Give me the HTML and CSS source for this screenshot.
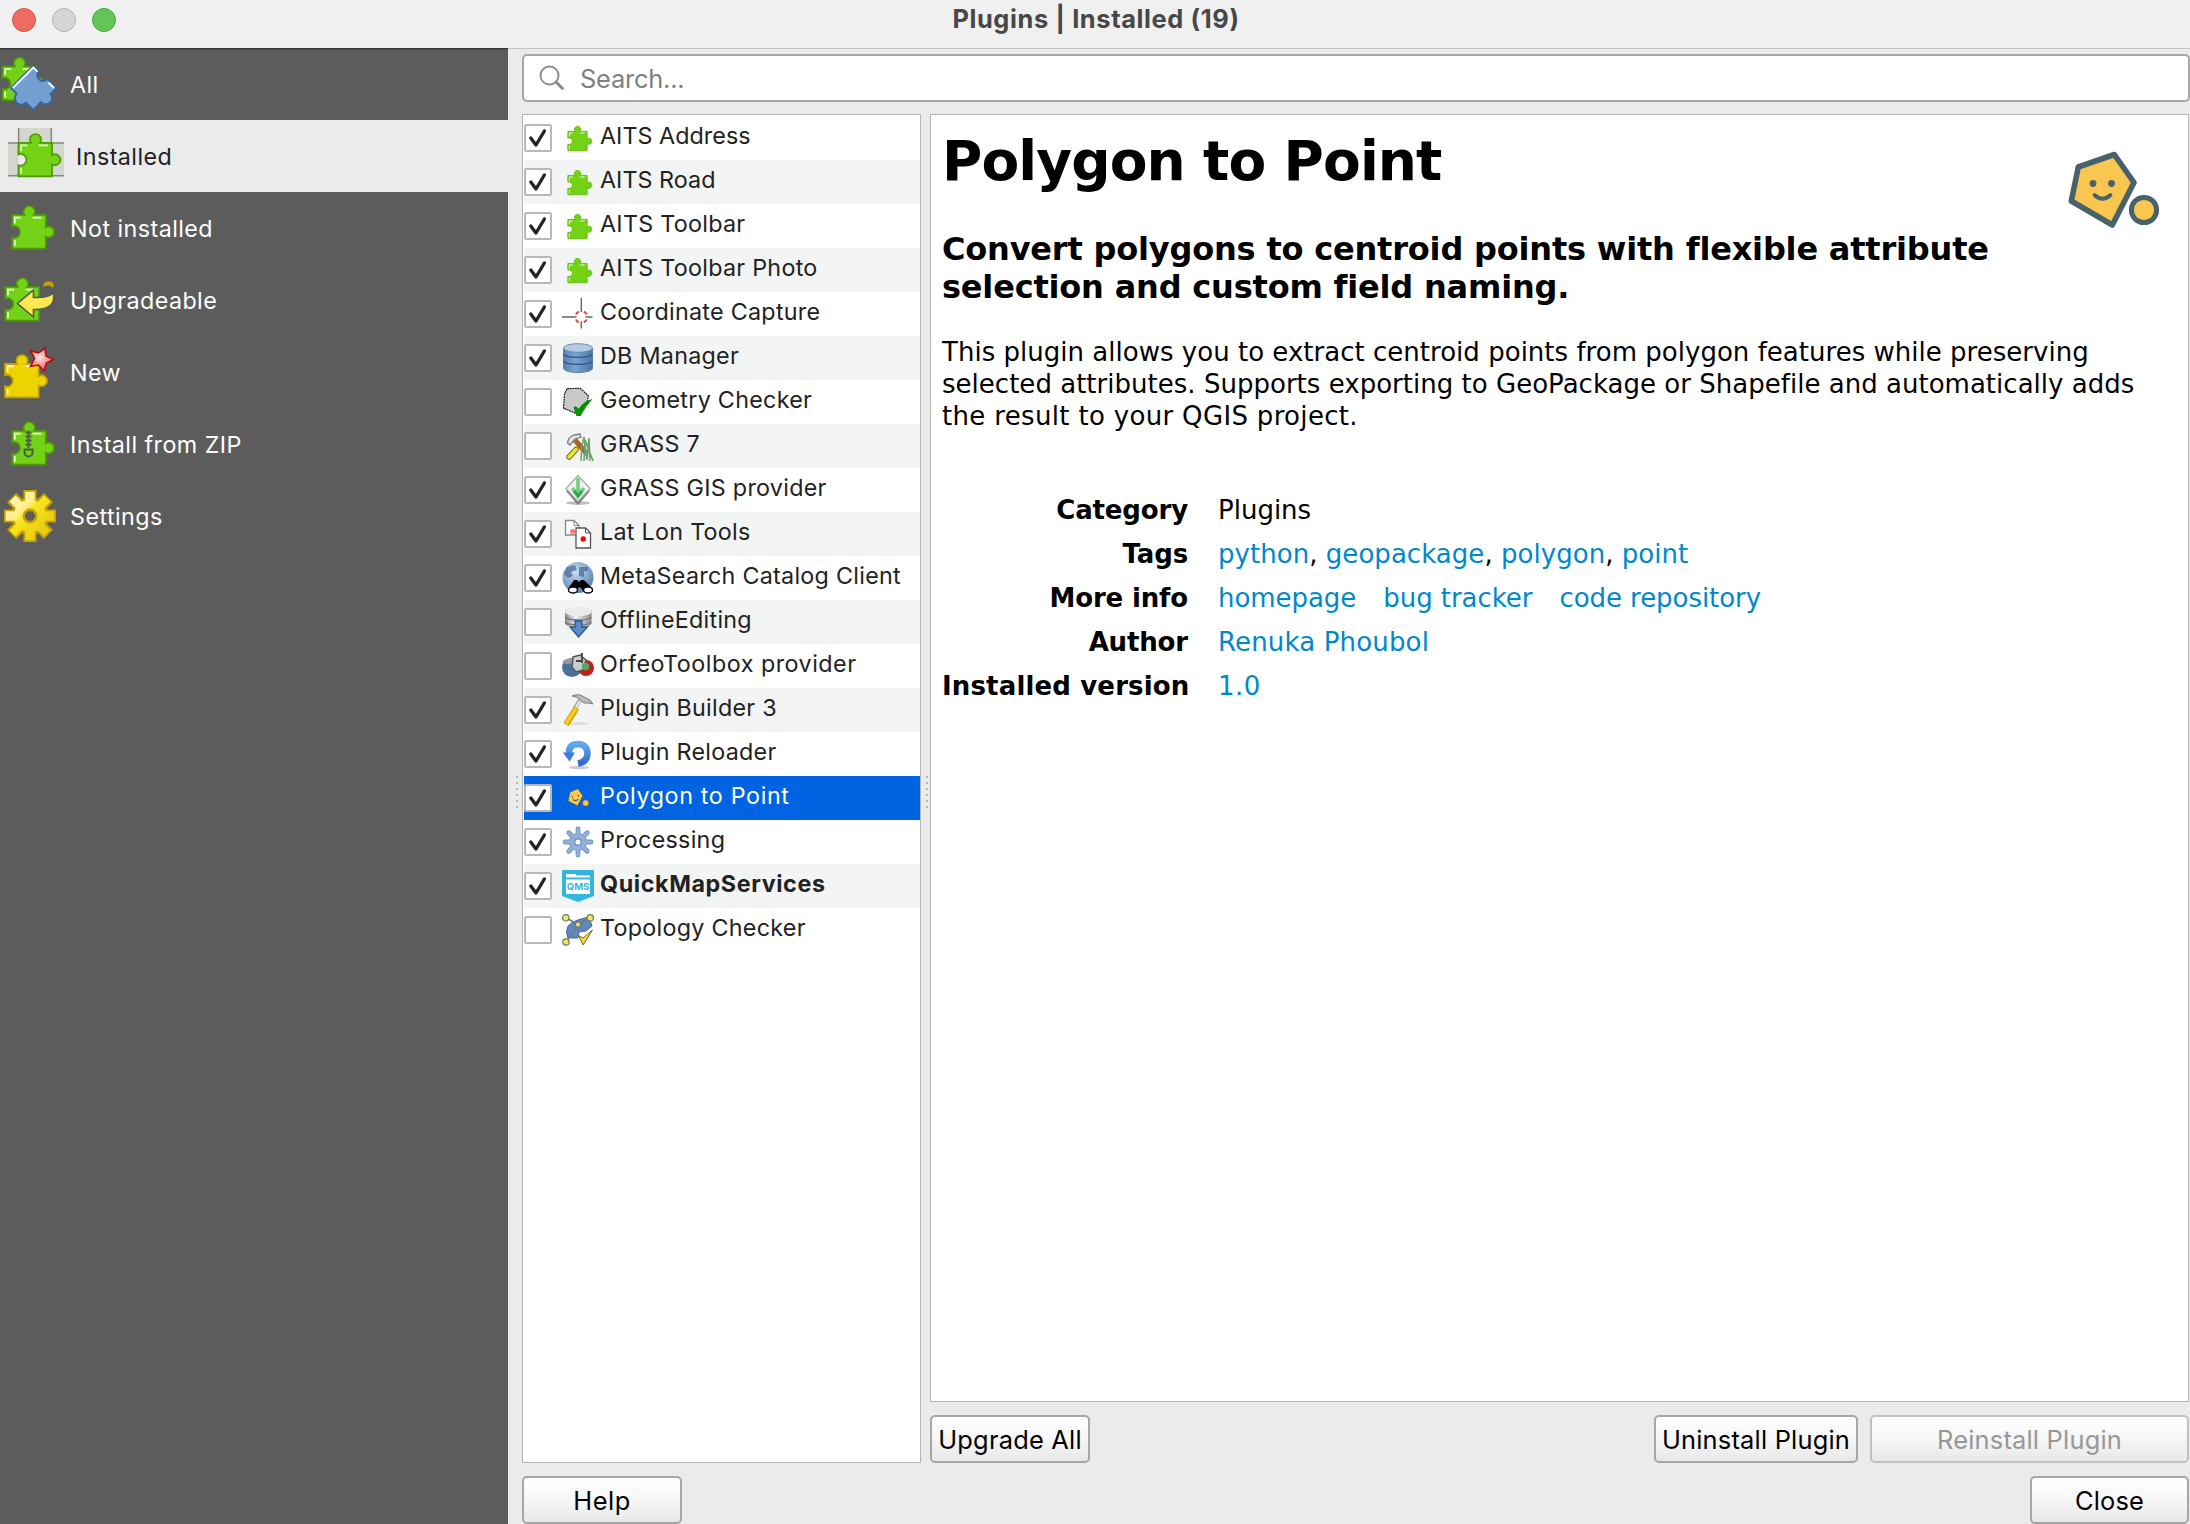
FILE: index.html
```html
<!DOCTYPE html>
<html lang="en">
<head>
<meta charset="utf-8">
<title>Plugins | Installed (19)</title>
<link rel="stylesheet" href="styles.css">
</head>
<body>
<svg class="defs" aria-hidden="true">
  <defs>
    <linearGradient id="gold" x1="0" y1="0" x2="1" y2="1"><stop offset="0" stop-color="#fffbd0"/><stop offset=".35" stop-color="#fff08a"/><stop offset=".45" stop-color="#fbe320"/><stop offset="1" stop-color="#dcc000"/></linearGradient>
    <linearGradient id="db" x1="0" x2="1"><stop offset="0" stop-color="#5580b0"/><stop offset=".4" stop-color="#7ba3d2"/><stop offset="1" stop-color="#4a76a8"/></linearGradient>
    <linearGradient id="silver" x1="0" x2="1"><stop offset="0" stop-color="#888"/><stop offset=".4" stop-color="#f2f2f2"/><stop offset="1" stop-color="#888"/></linearGradient>
    <linearGradient id="reload" x1="0" y1="0" x2="0" y2="1"><stop offset="0" stop-color="#62aaf0"/><stop offset="1" stop-color="#2f6bd0"/></linearGradient>
    <radialGradient id="star" cx=".4" cy=".4" r=".6"><stop offset="0" stop-color="#ffe6e6"/><stop offset="1" stop-color="#ee5a5a"/></radialGradient>
    <radialGradient id="globe" cx=".4" cy=".3" r=".8"><stop offset="0" stop-color="#cfe0f4"/><stop offset="1" stop-color="#4a74a8"/></radialGradient>
    <symbol id="puzzle" viewBox="0 0 44 44" overflow="visible">
      <path d="M1 9H13.4A5.6 5.6 0 1 1 22.6 9H34.6V21.4A5.4 5.4 0 1 1 34.6 30.6V42.6H1V31.4A5.8 5.8 0 1 0 1 20.6Z" stroke-width="1.7"/>
      <path d="M3.6 17.5V11.6H9.7M21.3 11.6H30.2M3.6 34V40" fill="none" stroke="#fff" stroke-width="1.7" opacity=".85"/>
    </symbol>
    <symbol id="check" viewBox="0 0 28 28"><path d="M6.800 14L12 21L20.400 7" fill="none" stroke="#222" stroke-width="3.300" stroke-linecap="round" stroke-linejoin="round"/></symbol>
    <symbol id="smallpuzzle" viewBox="0 0 32 32"><use href="#puzzle" x="5.300" y="4.300" width="25.200" height="25.200" class="lime"/></symbol>
  </defs>
</svg>
<div class="window">
  <header class="titlebar">
    <div class="lights"><i class="close"></i><i class="minimize"></i><i class="maximize"></i></div>
    <h1>Plugins | Installed (19)</h1>
  </header>
  <div class="main">
    <nav class="sidebar">
      <a class="tab"><svg viewBox="0 0 70 72"><use href="#puzzle" x="1.5" y="9.5" width="44" height="44" class="green"/><path d="M33.3 17.5L38.8 23A5.6 5.6 0 1 0 47.4 31.2L56.3 40L50.5 46A5.6 5.6 0 1 1 41 54L33.3 62L26 54.5A5.6 5.6 0 1 1 16.6 45.8L11 40Z" fill="#729fcf" stroke="#3465a4" stroke-width="1.8"/><path d="M12.8 40L33.3 19.5L37.5 23.7M48.5 34.5L54 40" fill="none" stroke="#fff" stroke-width="1.8"/></svg>All</a>
      <a class="tab current"><svg viewBox="0 0 70 72"><path d="M18 8H52V23H64V56H8V23H18Z" fill="#d3d7cf"/><path d="M18.6 8V56M51.3 8V56M8 23H64M8 55.8H64" stroke="#858780" stroke-width="1.5"/><path d="M18 31L27 34V46L18 45Z" fill="#ececec"/><use href="#puzzle" x="17.5" y="13.8" width="44" height="44" class="green"/></svg>Installed</a>
      <a class="tab"><svg viewBox="0 0 70 72"><use href="#puzzle" x="11.2" y="14" width="44" height="44" class="green"/></svg>Not installed</a>
      <a class="tab"><svg viewBox="0 0 70 72"><use href="#puzzle" x="4.4" y="14" width="44" height="44" class="green"/><path d="M40 28L41 20H48L56 24V44H40Z" fill="#5c5c5c"/><path d="M43.5 23V19.5Q48 15.5 53.5 19V24Q49 19.5 43.5 23Z" fill="#c4a000"/><path d="M17.500 39.500L33.500 26V33.500Q50 34 53.700 28V34Q53 46 33.500 45.500V53Z" fill="#fce94f" stroke="#555" stroke-width="1.6"/></svg>Upgradeable</a>
      <a class="tab"><svg viewBox="0 0 70 72"><use href="#puzzle" x="4" y="18.8" width="44" height="44" class="yellow"/><path d="M45 12L46 20L53.5 23.5L46.5 27L44 35L38.5 29L30.5 30.5L34.5 22.5L30.5 15L38.5 17Z" fill="url(#star)" stroke="#b50e0e" stroke-width="1.6"/></svg>New</a>
      <a class="tab"><svg viewBox="0 0 70 72"><use href="#puzzle" x="11.2" y="14" width="44" height="44" class="green"/><path d="M28.5 22.5V40M25.5 24.5H31.5M25.5 28.5H31.5M25.5 32.5H31.5M25.5 36.5H31.5" stroke="#4c5a48" stroke-width="1.9"/><path d="M24.5 41.5H32.5V44.5A4 4 0 0 1 24.5 44.5Z" fill="none" stroke="#4c5a48" stroke-width="2"/></svg>Install from ZIP</a>
      <a class="tab"><svg viewBox="0 0 70 72"><mask id="hole" maskUnits="userSpaceOnUse" x="0" y="0" width="70" height="72"><path d="M0 0H70V72H0Z" fill="#fff"/><circle cx="30" cy="36" r="5"/></mask><g mask="url(#hole)"><g fill="#c4a000"><circle cx="30" cy="36" r="19"/><path d="M23.5 10H36.5V62H23.5ZM4 29.5H56V42.5H4Z"/><path d="M23.5 10H36.5V62H23.5ZM4 29.5H56V42.5H4Z" transform="rotate(45 30 36)"/></g><path d="M25.2 11.8H34.8V20.5Q36.500 21 38 21.900L44.200 15.600L50.500 21.800L44.200 28Q45 29.500 45.500 31.200H54.300V40.800H45.500Q45 42.500 44.200 44L50.500 50.200L44.200 56.400L38 50.200Q36.500 51 34.800 51.500V60.200H25.200V51.500Q23.500 51 22 50.200L15.800 56.400L9.500 50.200L15.800 44Q15 42.500 14.500 40.800H5.700V31.200H14.500Q15 29.500 15.800 28L9.500 21.800L15.800 15.600L22 21.900Q23.500 21 25.200 20.500Z" fill="url(#gold)"/><circle cx="30" cy="36" r="6" fill="none" stroke="#c4a000" stroke-width="2.8"/></g></svg>Settings</a>
    </nav>
    <div class="content">
      <div class="search"><svg viewBox="0 0 28 28"><circle cx="11.5" cy="11.5" r="9" fill="none" stroke="#8e8e8e" stroke-width="2"/><path d="M18 18L24.5 24.5" stroke="#8e8e8e" stroke-width="3" stroke-linecap="round"/></svg>Search...</div>
      <div class="panes">
        <ul class="plugins">
          <li><b class="box"><svg><use href="#check"/></svg></b><svg class="icon"><use href="#smallpuzzle"/></svg><span class="tight">AITS Address</span></li>
          <li><b class="box"><svg><use href="#check"/></svg></b><svg class="icon"><use href="#smallpuzzle"/></svg><span class="tight">AITS Road</span></li>
          <li><b class="box"><svg><use href="#check"/></svg></b><svg class="icon"><use href="#smallpuzzle"/></svg><span>AITS Toolbar</span></li>
          <li><b class="box"><svg><use href="#check"/></svg></b><svg class="icon"><use href="#smallpuzzle"/></svg><span>AITS Toolbar Photo</span></li>
          <li><b class="box"><svg><use href="#check"/></svg></b><svg class="icon" viewBox="0 0 32 32"><path d="M19.300 0V14M19.300 23.500V30.500M0 19H14.500M23.500 19H30.500" stroke="#666" stroke-width="1.4"/><path d="M14 16.500Q14.700 14.500 16.800 13.700M21.800 13.700Q23.900 14.500 24.600 16.500M24.600 21.500Q23.900 23.500 21.800 24.300M16.800 24.300Q14.700 23.500 14 21.500" fill="none" stroke="#d64a4a" stroke-width="2.1"/></svg><span>Coordinate Capture</span></li>
          <li><b class="box"><svg><use href="#check"/></svg></b><svg class="icon" viewBox="0 0 32 32"><path d="M1.5 6V26C1.5 32 30.5 32 30.5 26V6Z" fill="url(#db)" stroke="#5f81ab"/><ellipse cx="16" cy="6" rx="14.5" ry="4.3" fill="#b4c9e2" stroke="#6f8db0"/><path d="M1.5 12C3 16.5 29 16.5 30.5 12M1.5 19C3 23.5 29 23.5 30.5 19" fill="none" stroke="#2d5384" stroke-width="1.200"/></svg><span>DB Manager</span></li>
          <li><b class="box"></b><svg class="icon" viewBox="0 0 32 32"><path d="M5 2.7L18.3 2.3L26.3 9.7L25 18L13 27L1.5 22.3L2.5 8Z" fill="#c8c8c8" stroke="#111" stroke-width="1.1" stroke-dasharray="2 .6"/><path d="M11.5 21.5Q14 19 16.5 23Q22 14.5 30.5 13Q23 21 18.5 30H14.5Z" fill="#009000"/></svg><span>Geometry Checker</span></li>
          <li><b class="box"></b><svg class="icon" viewBox="0 0 32 32"><path d="M13 10L25 24" stroke="#a9661c" stroke-width="5"/><path d="M19 31L20 16L22 7L25 30L27 8L28 31M22 31L23 10L31 31" fill="none" stroke="#6fa06c" stroke-width="1.6"/><path d="M7 27L14 19.5" stroke="#77772a" stroke-width="5.5" stroke-linecap="round"/><path d="M7 27L14 19.5" stroke="#e9e52e" stroke-width="3.500" stroke-linecap="round"/><path d="M5.5 13Q6 7 12 5L18 4L19 7L13 9L8 15Z" fill="#e6e6e6" stroke="#777" stroke-width="1.3"/></svg><span>GRASS 7</span></li>
          <li><b class="box"><svg><use href="#check"/></svg></b><svg class="icon" viewBox="0 0 32 32"><ellipse cx="16" cy="29" rx="12" ry="1.8" fill="#bbb"/><path d="M4 17L16 31L28 17L16 5Z" fill="#777"/><path d="M16 1.5L28 14.5L16 27.5L4 14.5Z" fill="#eef4ee" stroke="#aaa" stroke-width="1.3"/><path d="M16 4V19M10.500 14L16 22L22 14" fill="none" stroke="#6fd07c" stroke-width="3.6"/><path d="M12 17L16 22L20 17" fill="none" stroke="#35a84e" stroke-width="3"/></svg><span>GRASS GIS provider</span></li>
          <li><b class="box"><svg><use href="#check"/></svg></b><svg class="icon" viewBox="0 0 32 32"><path d="M3.5 2.5H12L17 7.5V17H3.5Z" fill="#fff" stroke="#888" stroke-width="1.3"/><path d="M12 2.5V7.5H17" fill="none" stroke="#888"/><circle cx="10.7" cy="13.5" r="2.6" fill="#f77"/><path d="M14 10H23.5L28.5 15V30H14Z" fill="#fff" stroke="#555" stroke-width="1.3"/><path d="M23.5 10V15H28.5" fill="none" stroke="#555"/><circle cx="21.2" cy="21" r="2.7" fill="#f00"/></svg><span>Lat Lon Tools</span></li>
          <li><b class="box"><svg><use href="#check"/></svg></b><svg class="icon" viewBox="0 0 32 32"><circle cx="16" cy="15.5" r="15.5" fill="url(#globe)"/><path d="M5 5L13 3L15 8L9 10L11 14L6 16L2 12ZM17 5H26V9H22V15L17 14Z" fill="#3b618e" opacity=".65"/><path d="M6 27L12 18H15L17 20L19 18H22L31 27V30H22L18 25L12 30H7Z" fill="#000"/><ellipse cx="11" cy="28" rx="4.5" ry="3" fill="#fff" stroke="#111" stroke-width="1.5"/><ellipse cx="26" cy="28" rx="4.5" ry="3" fill="#fff" stroke="#111" stroke-width="1.5"/></svg><span>MetaSearch Catalog Client</span></li>
          <li><b class="box"></b><svg class="icon" viewBox="0 0 32 32"><path d="M3 4V17C3 23 29.5 23 29.5 17V4Z" fill="url(#silver)"/><path d="M3 11C6 15 27 15 29.5 11M3 16C6 20 27 20 29.5 16" fill="none" stroke="#777" stroke-width="1.4"/><ellipse cx="16.3" cy="5.5" rx="13.3" ry="4.8" fill="#ebebeb"/><path d="M13 15H20V21H25.5L16.5 31L8 21H13Z" fill="#5b8ac8" stroke="#2d5384" stroke-width="1.3"/></svg><span>OfflineEditing</span></li>
          <li><b class="box"></b><svg class="icon" viewBox="0 0 32 32"><ellipse cx="10" cy="17.5" rx="10" ry="9.5" fill="#4a709e"/><path d="M0 12Q5 7 16 8L14 13L4 14Z" fill="#999"/><circle cx="24" cy="18" r="8" fill="#c21e1e"/><path d="M11 7L18 5L24 10L21 20L14 22L10 17Z" fill="#ccc" stroke="#555" stroke-width="1.5"/><path d="M14 11H21M20 3V13" stroke="#444" stroke-width="1.8"/><circle cx="23.5" cy="16.5" r="3.7" fill="#4cae60"/></svg><span class="wide">OrfeoToolbox provider</span></li>
          <li><b class="box"><svg><use href="#check"/></svg></b><svg class="icon" viewBox="0 0 32 32"><ellipse cx="16" cy="29.5" rx="11" ry="1.5" fill="#ddd"/><path d="M12.5 15L18.5 5" stroke="#999" stroke-width="4"/><path d="M13 14.5L19 5" stroke="#e8e8e8" stroke-width="2.2"/><path d="M10 2Q17-1 22 3L28 6L31 10L27 9L22 9L18 6Q16 2.5 10 2Z" fill="#bbb" stroke="#777"/><path d="M14.500 14L4 30.500" stroke="#d09a00" stroke-width="6"/><path d="M14 14.500L4 30" stroke="#ffcb20" stroke-width="3.600"/></svg><span>Plugin Builder 3</span></li>
          <li><b class="box"><svg><use href="#check"/></svg></b><svg class="icon" viewBox="0 0 32 32"><ellipse cx="17" cy="29.5" rx="10" ry="1.7" fill="#ccc"/><path d="M7 15Q7 6 16 6Q25.5 6.5 25.5 16Q25 24 16 25.5" fill="none" stroke="url(#reload)" stroke-width="6.5"/><path d="M.8 14.5H13L7.5 23.5Z" fill="#3d7de0"/></svg><span>Plugin Reloader</span></li>
          <li class="selected"><b class="box"><svg><use href="#check"/></svg></b><svg class="icon" viewBox="0 0 32 32"><path d="M8 10L16 6.5L21 14L15.5 24L6 19Z" fill="#f9c650" stroke="#455f67" stroke-width=".9"/><circle cx="23.7" cy="21" r="3.3" fill="#f9c650" stroke="#455f67" stroke-width=".9"/><path d="M10.5 14V15.5M16.5 13V14.5M11 17.5Q14 20 16.5 17" fill="none" stroke="#455f67" stroke-width="1.1"/></svg><span class="wider">Polygon to Point</span></li>
          <li><b class="box"><svg><use href="#check"/></svg></b><svg class="icon" viewBox="0 0 32 32"><g fill="none" stroke-linecap="round"><path d="M16 3V29M3 16H29M6.8 6.8L25.2 25.2M25.2 6.8L6.8 25.2" stroke="#6f95c4" stroke-width="4.8"/><circle cx="16" cy="16" r="6.5" stroke="#6f95c4" stroke-width="5"/><path d="M16 3V29M3 16H29M6.8 6.8L25.2 25.2M25.2 6.8L6.8 25.2" stroke="#93b2da" stroke-width="2.8"/><circle cx="16" cy="16" r="6" stroke="#93b2da" stroke-width="4"/></g><circle cx="16" cy="16" r="3.3" fill="#fff" stroke="#6f95c4" stroke-width="1.5"/></svg><span>Processing</span></li>
          <li><b class="box"><svg><use href="#check"/></svg></b><svg class="icon" viewBox="0 0 32 32"><path d="M0 1Q0 0 1 0H31Q32 0 32 1V26L16 32L0 26Z" fill="#34b6dc"/><path d="M4 4H13L15 5.500H28V7.500H4ZM4 9.500H28V24H4Z" fill="#fff"/><text x="16" y="20.300" class="qms">QMS</text></svg><strong>QuickMapServices</strong></li>
          <li><b class="box"></b><svg class="icon" viewBox="0 0 32 32"><path d="M6 12Q11 6 27 3L30 12L24 17L17 18L16 24H6Q3 18 6 12Z" fill="#6088bd" stroke="#4a70a3"/><path d="M3.5 3.5L16 10.5L28 3.5M16 10.5L4 28" fill="none" stroke="#6e7f80" stroke-width="1.6"/><g fill="#f5e94a" stroke="#66788a" stroke-width="1.2"><circle cx="3.8" cy="3.8" r="3.2"/><circle cx="28.2" cy="3.800" r="3.2"/><circle cx="16" cy="10.500" r="2.6"/><circle cx="4" cy="28" r="3.2"/></g><path d="M16.500 21.500L21 24L30.500 16L21 31Z" fill="#f4d93c" stroke="#7a6a1c"/></svg><span>Topology Checker</span></li>
        </ul>
        <section class="right">
          <article class="details">
            <div class="intro">
              <h2>Polygon to Point</h2>
              <svg class="logo" viewBox="0 0 92 78"><g stroke="#47626a" stroke-linecap="round" stroke-linejoin="round"><path d="M46.3 4.5L66 32.5L44.3 75L3.3 51L10.3 17Z" fill="#f9c650" stroke-width="5.6"/><circle cx="76" cy="60" r="12.6" fill="#f9c650" stroke-width="5"/><path d="M26.5 45Q34.5 52.5 42.5 45" fill="none" stroke-width="3.8"/></g><circle cx="25" cy="33.5" r="3.4" fill="#47626a"/><circle cx="43.5" cy="33.5" r="3.4" fill="#47626a"/></svg>
            </div>
            <h3>Convert polygons to centroid points with flexible attribute<br>selection and custom field naming.</h3>
            <p>This plugin allows you to extract centroid points from polygon features while preserving<br>selected attributes. Supports exporting to GeoPackage or Shapefile and automatically adds<br><span>the result to your QGIS project.</span></p>
            <dl>
              <dt>Category</dt><dd>Plugins</dd>
              <dt>Tags</dt><dd class="tags"><a>python</a>, <a>geopackage</a>, <a>polygon</a>, <a>point</a></dd>
              <dt>More info</dt><dd class="links"><a>homepage</a><a>bug tracker</a><a>code repository</a></dd>
              <dt>Author</dt><dd><a class="author">Renuka Phoubol</a></dd>
              <dt class="version">Installed version</dt><dd><a class="number">1.0</a></dd>
            </dl>
          </article>
          <div class="actions"><button class="upgrade">Upgrade All</button><button class="uninstall">Uninstall Plugin</button><button class="reinstall" disabled>Reinstall Plugin</button></div>
        </section>
        <i class="grip grip-left"></i><i class="grip grip-right"></i>
      </div>
      <footer><button class="help">Help</button><button class="dismiss">Close</button></footer>
    </div>
  </div>
</div>
</body>
</html>
```
FILE: styles.css
```css
* { box-sizing: border-box; }
body { margin: 0; font-family: Inter, "Liberation Sans", sans-serif; font-size: 23.3px; color: #222; }
h1, h2, h3, p, dl, dd, ul { margin: 0; padding: 0; }
.defs { position: absolute; width: 0; height: 0; }
.green { fill: #73d216; stroke: #4e9a06; }
.lime { fill: #73d216; stroke: #68bb18; }
.yellow { fill: #edd400; stroke: #c4a000; }

.window { display: flex; flex-direction: column; width: 2190px; height: 1524px; overflow: hidden; background: #ebebeb; }
.titlebar { display: grid; grid-template-columns: 500px 1fr 498px; height: 48px; flex: none; background: #f0f0f0; }
.titlebar h1 { text-align: center; font-size: 25.4px; line-height: 37px; font-weight: 700; letter-spacing: .62px; color: #474747; }
.lights { display: flex; gap: 16px; padding: 8px 0 0 12px; }
.lights i { width: 24px; height: 24px; border: 1px solid; border-radius: 50%; }
.lights .close { background: #ed6b60; border-color: #d65448; }
.lights .minimize { background: #d6d6d6; border-color: #b5b5b5; }
.lights .maximize { background: #62c555; border-color: #4aa73c; }

.main { display: flex; flex: 1; min-height: 0; }
.sidebar { width: 508px; background: #5c5c5c; box-shadow: inset 0 1.5px #393939; }
.tab { display: flex; align-items: center; height: 72px; color: #fff; letter-spacing: .44px; }
.tab svg { width: 70px; height: 72px; flex: none; }
.tab.current { background: #ebebeb; color: #222; }
.tab.current svg { margin-right: 6px; }

.content { flex: 1; min-width: 0; display: flex; flex-direction: column; padding: 6px 0 0 14px; border-top: 1px solid #c4c4c4; }
.search { display: flex; align-items: center; height: 48px; margin-top: -1px; padding-left: 14px; flex: none; background: #fff; border: 2px solid #a6a6a6; border-radius: 5px; color: #7f7f7f; font-size: 25.4px; letter-spacing: -.2px; }
.search svg { width: 28px; height: 28px; margin: 0 14px 0 0; }

.panes { position: relative; display: flex; gap: 9px; height: 1349px; margin-top: 12px; }
.plugins { width: 399px; padding: 1px 0 1px 1px; list-style: none; background: #fff; border: 1px solid #b4b4b4; }
.plugins li { display: flex; align-items: center; height: 44px; letter-spacing: .28px; }
.plugins li:nth-child(even) { background: #f3f5f5; }
.plugins li.selected { background: #0063e1; color: #fff; }
.plugins span, .plugins strong { padding-bottom: 5px; white-space: nowrap; }
.box { width: 28px; height: 28px; flex: none; background: #fff; border: 2px solid #b8b8b8; border-radius: 2px; }
.box svg { display: block; width: 28px; height: 28px; margin: -2px; }
.icon { width: 32px; height: 32px; flex: none; margin: 0 6px 0 10px; }
.plugins .tight { letter-spacing: .05px; }
.plugins .wide { letter-spacing: .5px; }
.plugins .wider { letter-spacing: .64px; }
.plugins strong { letter-spacing: .6px; }
.qms { font: 700 9.5px Inter, sans-serif; letter-spacing: 0; text-anchor: middle; fill: #34b6dc; }

.right { flex: 1; min-width: 0; display: flex; flex-direction: column; padding-right: 1px; }
.details { height: 1289px; padding: 14px 11px; background: #fff; border: 1px solid #b4b4b4; color: #000; font-family: "DejaVu Sans", sans-serif; font-size: 26px; white-space: nowrap; }
.intro { display: flex; justify-content: space-between; height: 64px; }
.intro h2 { font-size: 55px; line-height: 64px; letter-spacing: -.9px; }
.logo { width: 92px; height: 78px; margin: 21px 17px 0 0; flex: none; }
.details h3 { margin-top: 37px; font-size: 32px; line-height: 38px; letter-spacing: -.19px; }
.details p { margin-top: 30px; line-height: 32px; letter-spacing: .02px; }
.details p span { letter-spacing: .33px; }
.details dl { display: grid; grid-template-columns: 246px 1fr; column-gap: 30px; margin-top: 56px; line-height: 44px; }
.details dt { text-align: right; font-weight: 700; letter-spacing: -.15px; }
.details dt.version { letter-spacing: .15px; }
.details a { color: #0088cc; }
.tags { letter-spacing: .04px; }
.links { display: flex; gap: 27px; letter-spacing: -.05px; }
.author { letter-spacing: .16px; }
.number { letter-spacing: .5px; }

.actions { display: flex; gap: 12px; margin-top: 13px; }
button { height: 48px; padding: 0; border: 2px solid #a6a6a6; border-radius: 5px; background: linear-gradient(#fff, #f6f6f6 50%, #e8e8e8); color: #000; font: 400 25.4px Inter, sans-serif; letter-spacing: .22px; white-space: nowrap; }
button:disabled { border-color: #c0c0c0; color: #979797; }
.upgrade { width: 160px; margin-right: auto; }
.uninstall { width: 204px; }
.reinstall { width: 319px; }
footer { display: flex; justify-content: space-between; padding: 13px 1px 0 0; }
footer .help { width: 160px; letter-spacing: .5px; }
footer .dismiss { width: 159px; }

.grip { position: absolute; width: 2px; height: 34px; top: 662px; background: repeating-linear-gradient(#b8b8b8 0 2px, transparent 2px 6px); }
.grip-left { left: -6px; }
.grip-right { left: 404px; }
```
